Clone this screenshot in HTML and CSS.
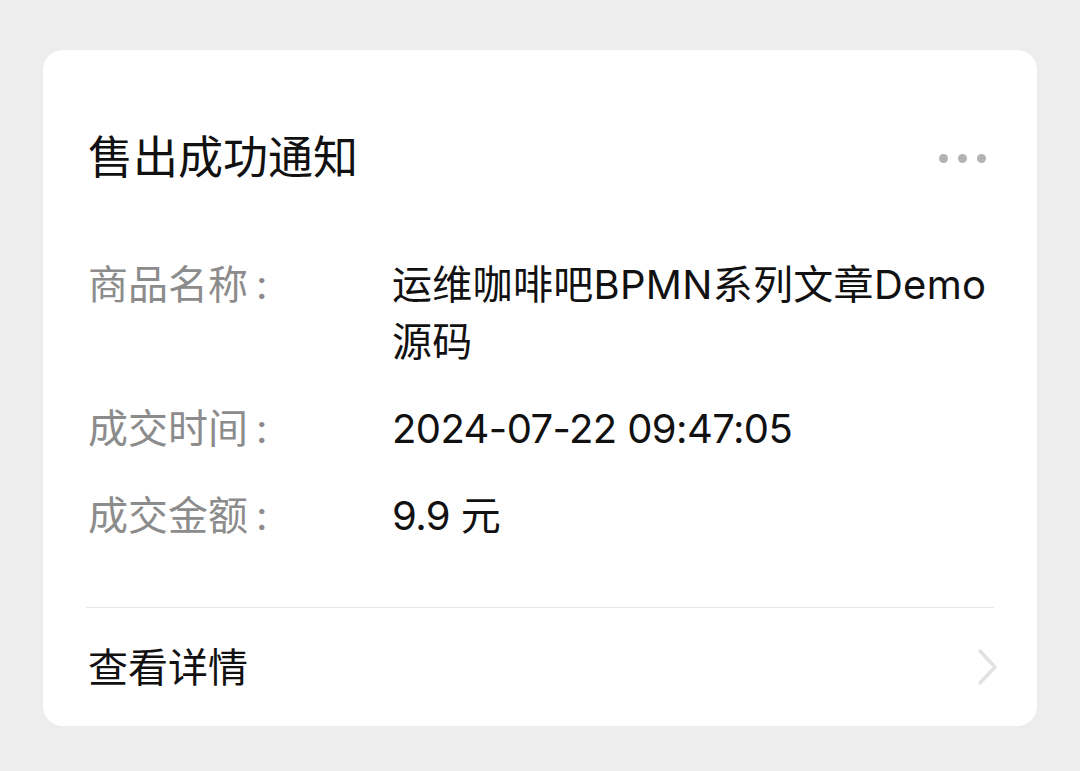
FILE: index.html
```html
<!DOCTYPE html>
<html lang="zh">
<head>
<meta charset="utf-8">
<link rel="stylesheet" href="styles.css">
</head>
<body>
<div class="card">
  <div class="header">
    <div class="title">售出成功通知</div>
    <div class="dots"><span></span><span></span><span></span></div>
  </div>
  <div class="rows">
    <div class="row">
      <div class="label">商品名称<span class="colon">:</span></div>
      <div class="value">运维咖啡吧BPMN系列文章Demo源码</div>
    </div>
    <div class="row">
      <div class="label">成交时间<span class="colon">:</span></div>
      <div class="value num">2024-07-22 09:47:05</div>
    </div>
    <div class="row">
      <div class="label">成交金额<span class="colon">:</span></div>
      <div class="value num">9.9 元</div>
    </div>
  </div>
  <div class="footer">
    <div class="more">查看详情</div>
    <svg class="chev" width="22" height="38" viewBox="0 0 22 38"><path d="M3 3 L18 19 L3 35" fill="none" stroke="#e2e2e2" stroke-width="3.5" stroke-linecap="round" stroke-linejoin="round"/></svg>
  </div>
</div>
</body>
</html>
```
FILE: styles.css
```css
html, body {
  margin: 0;
  padding: 0;
  background: #ededed;
}
body {
  padding: 50px 43px 0 43px;
  font-family: "Inter", "Noto Sans CJK SC", sans-serif;
  color: #111;
}
.card {
  width: 994px;
  height: 676px;
  box-sizing: border-box;
  background: #fff;
  border-radius: 20px;
  padding: 78px 43px 0 43px;
  display: flex;
  flex-direction: column;
}
.header {
  display: flex;
  justify-content: space-between;
  align-items: center;
  height: 60px;
}
.title {
  font-size: 45px;
  line-height: 60px;
  padding-left: 2px;
}
.dots {
  display: flex;
  gap: 10px;
  margin-right: 8px;
}
.dots span {
  width: 9px;
  height: 9px;
  border-radius: 50%;
  background: #b3b3b3;
}
.rows {
  margin-top: 68px;
  display: flex;
  flex-direction: column;
  gap: 30px;
}
.row {
  display: flex;
  font-size: 40px;
  line-height: 57px;
}
.label {
  width: 304px;
  flex: none;
  color: #8c8c8c;
  padding-left: 2px;
}
.colon {
  margin-left: 8px;
}
.value {
  flex: 1;
  color: #111;
  letter-spacing: 0.3px;
}
.value.num {
  letter-spacing: -0.6px;
}
.footer {
  margin-top: 63px;
  border-top: 1px solid #e8e8e8;
  height: 118px;
  display: flex;
  align-items: center;
  justify-content: space-between;
}
.more {
  font-size: 40px;
  line-height: 57px;
  padding-left: 2px;
}
.chev {
  margin-right: -5px;
}
```
